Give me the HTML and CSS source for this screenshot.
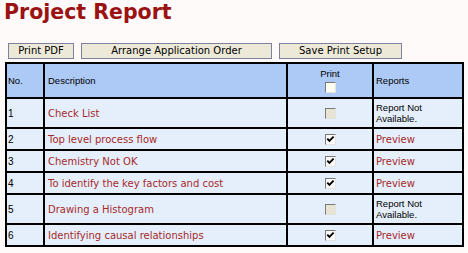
FILE: index.html
```html
<!DOCTYPE html>
<html>
<head>
<meta charset="utf-8">
<title>Project Report</title>
<link rel="stylesheet" href="styles.css">
</head>
<body>
<h1 class="title">Project Report</h1>
<div class="toolbar">
  <button class="btn btn-pdf" type="button">Print PDF</button>
  <button class="btn btn-order" type="button">Arrange Application Order</button>
  <button class="btn btn-save" type="button">Save Print Setup</button>
</div>
<table class="report">
  <colgroup>
    <col class="c-no"><col class="c-desc"><col class="c-print"><col class="c-rep">
  </colgroup>
  <thead>
    <tr>
      <th class="no">No.</th>
      <th class="desc">Description</th>
      <th class="print"><div class="print-label">Print</div><span class="cb cb-head"></span></th>
      <th class="rep">Reports</th>
    </tr>
  </thead>
  <tbody>
    <tr class="tall">
      <td class="no">1</td>
      <td class="desc"><a class="link">Check List</a></td>
      <td class="print"><span class="cb cb-dis"></span></td>
      <td class="rep na">Report Not<br>Available.</td>
    </tr>
    <tr>
      <td class="no">2</td>
      <td class="desc"><a class="link">Top level process flow</a></td>
      <td class="print"><span class="cb cb-on"><svg width="9" height="9" viewBox="0 0 9 9"><path d="M1.3 3.6 L3.4 5.8 L7.6 1.6" fill="none" stroke="#000" stroke-width="1.9"/></svg></span></td>
      <td class="rep"><a class="link">Preview</a></td>
    </tr>
    <tr>
      <td class="no">3</td>
      <td class="desc"><a class="link">Chemistry Not OK</a></td>
      <td class="print"><span class="cb cb-on"><svg width="9" height="9" viewBox="0 0 9 9"><path d="M1.3 3.6 L3.4 5.8 L7.6 1.6" fill="none" stroke="#000" stroke-width="1.9"/></svg></span></td>
      <td class="rep"><a class="link">Preview</a></td>
    </tr>
    <tr>
      <td class="no">4</td>
      <td class="desc"><a class="link">To identify the key factors and cost</a></td>
      <td class="print"><span class="cb cb-on"><svg width="9" height="9" viewBox="0 0 9 9"><path d="M1.3 3.6 L3.4 5.8 L7.6 1.6" fill="none" stroke="#000" stroke-width="1.9"/></svg></span></td>
      <td class="rep"><a class="link">Preview</a></td>
    </tr>
    <tr class="tall">
      <td class="no">5</td>
      <td class="desc"><a class="link">Drawing a Histogram</a></td>
      <td class="print"><span class="cb cb-dis"></span></td>
      <td class="rep na">Report Not<br>Available.</td>
    </tr>
    <tr>
      <td class="no">6</td>
      <td class="desc"><a class="link">Identifying causal relationships</a></td>
      <td class="print"><span class="cb cb-on"><svg width="9" height="9" viewBox="0 0 9 9"><path d="M1.3 3.6 L3.4 5.8 L7.6 1.6" fill="none" stroke="#000" stroke-width="1.9"/></svg></span></td>
      <td class="rep"><a class="link">Preview</a></td>
    </tr>
  </tbody>
</table>
</body>
</html>
```

FILE: styles.css
```css
* { box-sizing: border-box; }

body {
  margin: 0;
  background: #fdfaf9;
  font-family: "Liberation Sans", Arial, sans-serif;
  color: #000;
}

.title {
  margin: 0;
  padding-left: 4px;
  font: bold 20.5px/24px "DejaVu Sans", Verdana, sans-serif;
  color: #9b1212;
}

.toolbar {
  display: flex;
  gap: 7px;
  margin: 19px 0 0 8px;
}

.btn {
  height: 16px;
  padding: 0;
  margin: 0;
  border: 1px solid #7f7f9e;
  background: #ece9d8;
  color: #000;
  font: 10px/14px "DejaVu Sans", Verdana, sans-serif;
  text-align: center;
}
.btn-pdf { width: 66px; }
.btn-order { width: 191px; }
.btn-save { width: 123px; }

.report {
  margin: 3px 0 0 5px;
  width: 457px;
  border-collapse: collapse;
  table-layout: fixed;
  border: 2px solid #000;
}
.c-no { width: 38px; }
.c-desc { width: 243px; }
.c-print { width: 86px; }
.c-rep { width: 90px; }

.report th,
.report td {
  border: 2px solid #000;
  padding: 0 1px;
  vertical-align: middle;
  text-align: left;
  font-weight: normal;
  font-size: 9.5px;
  line-height: 11px;
}

.report thead th {
  background: #adc9f5;
  height: 35px;
}

.report tbody td {
  background: #e5eefb;
  height: 22px;
}
.report tbody tr.tall td { height: 30px; }

.report .desc { padding-left: 3px; }
.report .print { text-align: center; }
.report .rep { padding-left: 2px; }

.report td.no { font-size: 10px; }

.print-label { line-height: 12px; margin-bottom: 2px; }

.link {
  color: #a52a2a;
  font-family: "DejaVu Sans", Verdana, sans-serif;
  font-size: 10px;
  text-decoration: none;
}

.cb {
  display: inline-block;
  width: 11px;
  height: 11px;
  vertical-align: middle;
  border: 1px solid;
  border-color: #7a7a7a #e4e4e4 #e4e4e4 #7a7a7a;
  background: #fff;
}
.cb svg { display: block; }
.cb-head { background: #fdfdf2; }
.cb-dis { background: #e8e4d3; }
.cb-on { background: #fafafa; }
```
